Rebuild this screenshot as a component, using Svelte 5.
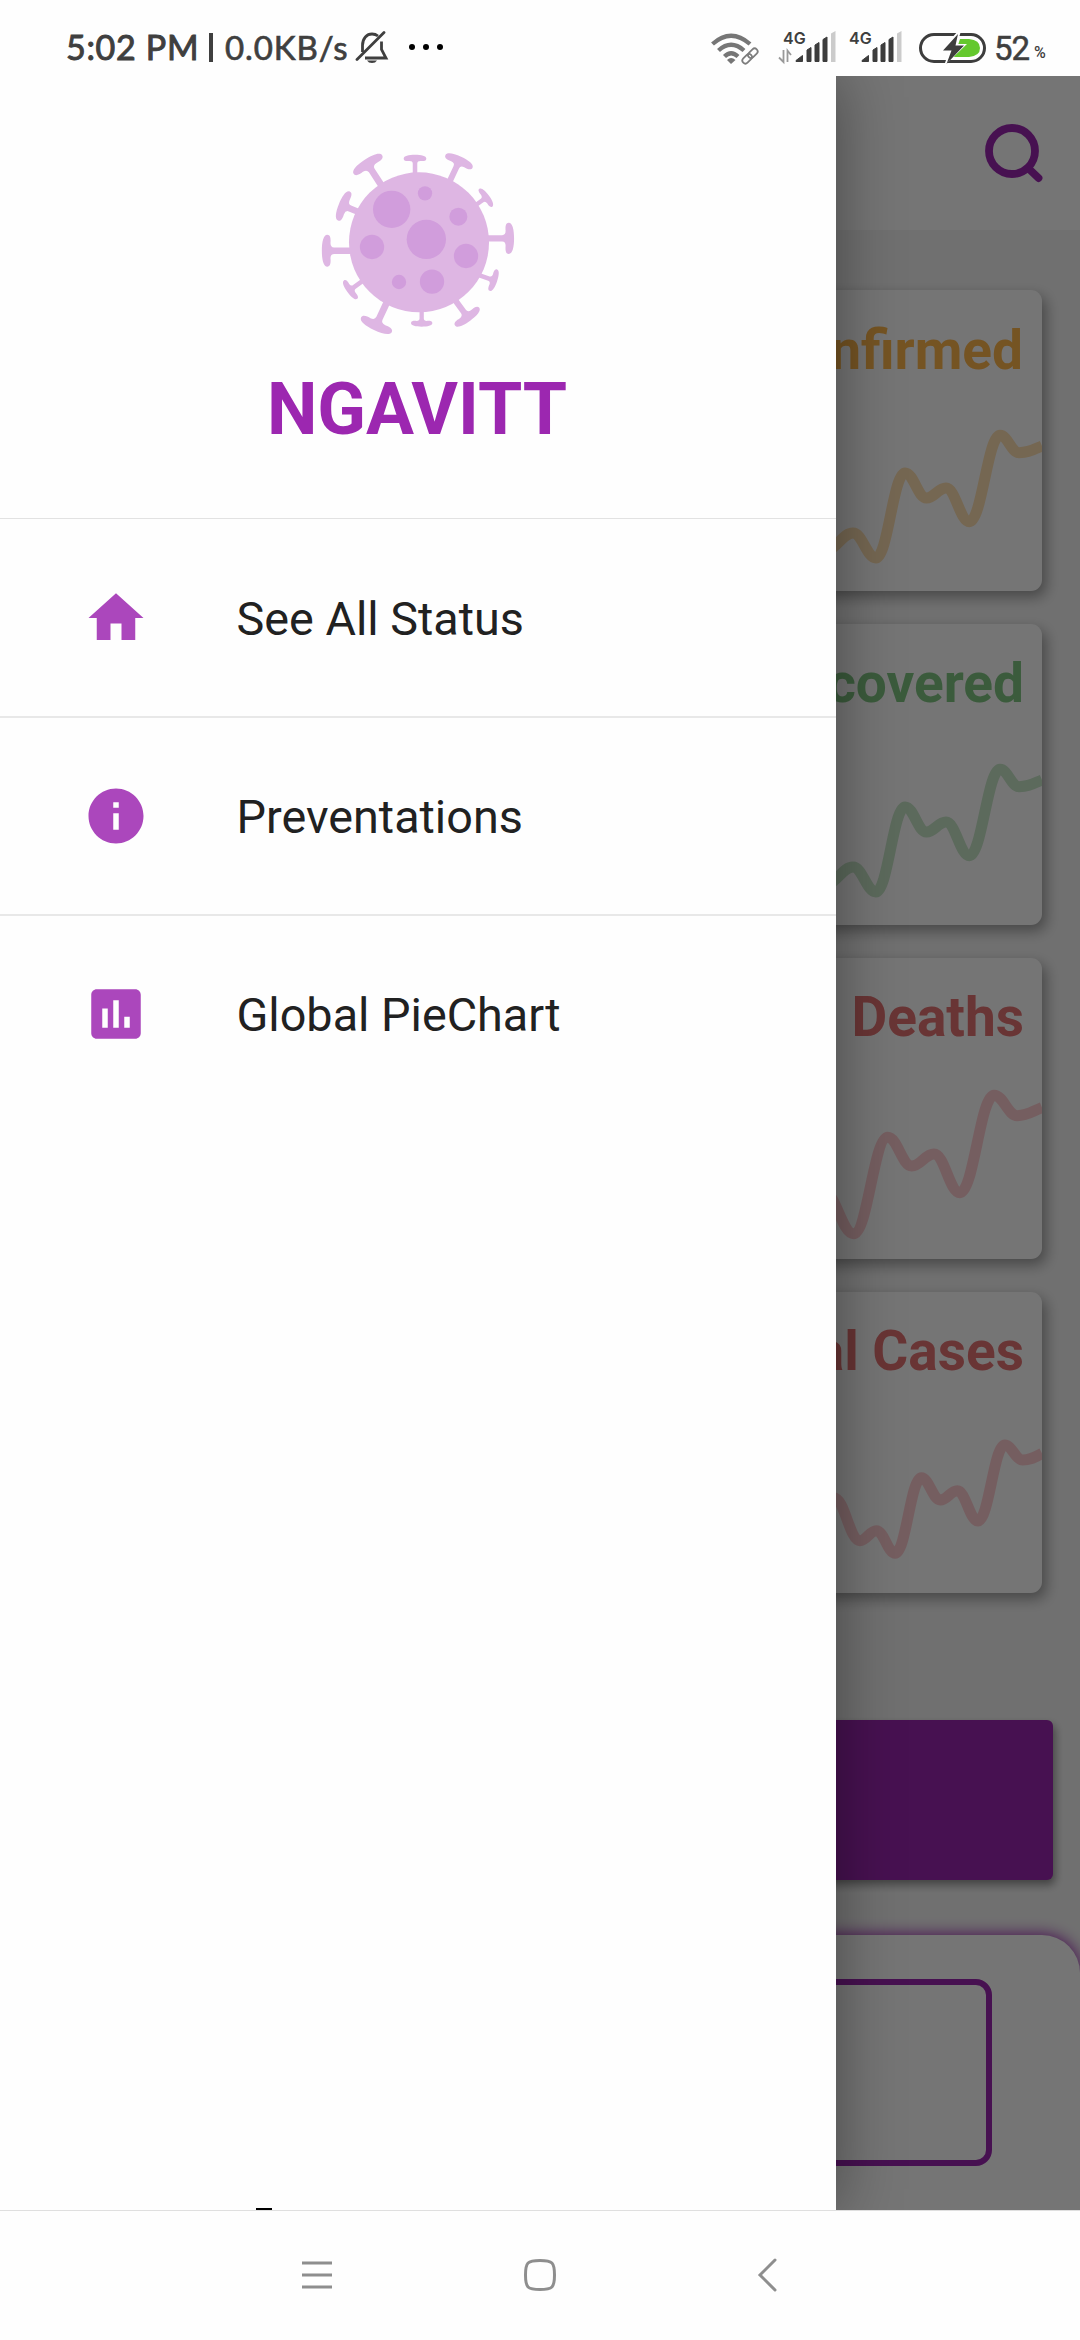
<script>
  const menu = [
    { label: 'See All Status', icon: 'M10 20v-6h4v6h5v-8h3L12 3 2 12h3v8z' },
    {
      label: 'Preventations',
      icon: 'M12 2C6.48 2 2 6.48 2 12s4.48 10 10 10 10-4.48 10-10S17.52 2 12 2zm1 15h-2v-6h2v6zm0-8h-2V7h2v2z'
    },
    {
      label: 'Global PieChart',
      icon: 'M19 3H5c-1.1 0-2 .9-2 2v14c0 1.1.9 2 2 2h14c1.1 0 2-.9 2-2V5c0-1.1-.9-2-2-2zM9 17H7v-7h2v7zm4 0h-2V7h2v10zm4 0h-2v-4h2v4z'
    }
  ];

  const waveA = [[794, 268], [826, 260], [853, 243], [876, 268], [905, 183], [926.5, 208], [946, 198], [969.5, 231.7], [1000, 145.3], [1019, 162.7], [1042, 156]];
  const cards = [
    { title: 'Confirmed', tone: 'orange', points: waveA },
    { title: 'Recovered', tone: 'green', points: waveA },
    { title: 'Deaths', tone: 'red', points: [[824, 234], [853.7, 275.7], [887.7, 179.3], [911.7, 208], [934, 196], [960, 234.7], [994, 137.3], [1017.3, 157.7], [1042, 149.5]] },
    { title: 'Total Cases', tone: 'red', points: [[834, 206], [860, 248.7], [876.3, 238.7], [895.3, 261.3], [921.3, 185.7], [940.3, 208], [957.3, 198.7], [978, 229], [1004.7, 153], [1022.7, 168], [1042, 161.5]] }
  ];

  function curve(points) {
    let d = `M${points[0][0]} ${points[0][1]}`;
    for (let i = 1; i < points.length; i++) {
      const [x0, y0] = points[i - 1];
      const [x1, y1] = points[i];
      const k = (x1 - x0) * 0.4;
      const end = i === points.length - 1 ? y1 + 4 : y1;
      d += `C${x0 + k} ${y0} ${x1 - k} ${end} ${x1} ${y1}`;
    }
    return d;
  }

  const spikes = [
    [352, 101, -33, 1.02], [495, 84, 0, 0.68], [628, 92, 25, 0.9], [709, 202, 54, 0.66],
    [779, 325, 90, 0.94], [732, 451, 109, 0.68], [653, 562, 144, 0.9], [515, 581, 180, 0.64],
    [378, 587, 205, 1.02], [300, 480, 234, 0.68], [229, 362, 270, 0.96], [279, 227, -68, 0.94]
  ];
  const spots = [
    [425, 238, 56], [525, 190, 21.5], [625, 260, 27], [529, 328, 59], [366, 351, 36.5],
    [648, 378, 36.5], [447, 456, 21.5], [546, 455, 36.5]
  ];
</script>

<div class="phone">
  <header class="status">
    <span class="time">5:02 PM</span>
    <span class="bar"></span>
    <span class="speed">0.0KB/s</span>
    <svg class="bell" width="34" height="34" viewBox="0 0 34 34">
      <g fill="none" stroke="#3f3f3f" stroke-width="2.8">
        <path d="M7.5 21V14.500C7.500 7 12 3 17 3Q20.500 3 23 5" />
        <path d="M26.500 10.500V18.500L31 27H10" />
        <path d="M2 28.500L29 1.500" stroke-linecap="round" />
      </g>
      <path d="M12 29.500H22Q20.500 32 17 32T12 29.500z" fill="#3f3f3f" />
    </svg>
    <span class="dots"><i></i><i></i><i></i></span>
    <svg class="wifi" width="50" height="36" viewBox="0 0 50 36">
      <g fill="none" stroke="#767676" stroke-width="4.300">
        <path d="M2.500 14Q21 -2.500 40 14" />
        <path d="M8.500 20.500Q21 9 34 20.500" />
        <path d="M14.500 26.500Q21 20 28 26.500" />
      </g>
      <path d="M17 30Q21 26 25.500 30L21 34z" fill="#767676" />
      <g transform="translate(40 26) rotate(-45)">
        <g fill="none" stroke="#fff" stroke-width="5"><rect x="-9.500" y="-3" width="11" height="6.500" rx="3.200" /></g>
        <g fill="none" stroke="#7d7d7d" stroke-width="1.800">
          <rect x="-9.500" y="-3" width="11" height="6" rx="3" /><rect x="-1.500" y="-3" width="11" height="6" rx="3" />
        </g>
      </g>
    </svg>
    {#each [true, false] as data}
      <div class="sim" class:data>
        <span>4G</span>
        <svg width="60" height="34" viewBox="0 0 60 34">
          {#if data}
            <path d="M5.500 19v12L1 26.500M9.500 31V19.500L13 24" fill="none" stroke="#999" stroke-width="1.800" />
          {/if}
          <path d="M18 30.500v-1l6.500-5v6zM29 30.500V19l4-2.500v14zM37 30.500V14l4-2.500v19zM45 30.500V8.500l4-2.500v24.500z" fill="#3d3d3d" stroke="#3d3d3d" stroke-linejoin="round" />
          <path d="M53 31V2.500l4.500-2.500V31z" fill="#cbcbcb" />
        </svg>
      </div>
    {/each}
    <svg class="battery" width="70" height="34" viewBox="0 0 70 34">
      <rect x="2.500" y="3.500" width="64" height="27" rx="13.500" fill="none" stroke="#3d3d3d" stroke-width="3" />
      <path d="M42 8H51Q62 9 62 17T51 26H36z" fill="#64c82d" />
      <path d="M41 -1L22 20H31L26 35 49 13H39L43 0z" fill="#fff" />
      <path d="M40 3L25 19.500H33.500L28.500 33 46 14.500H37.500z" fill="#3d3d3d" />
    </svg>
    <span class="level">52</span><span class="percent">%</span>
  </header>

  <div class="stage">
    <main class="page">
      <div class="appbar">
        <svg width="68" height="68" viewBox="0 0 68 68">
          <circle cx="34" cy="34" r="23" />
          <path d="M50 51L60.500 61" />
        </svg>
      </div>
      <div class="cards">
        {#each cards as card}
          <section class="card {card.tone}">
            <h2>{card.title}</h2>
            <svg viewBox="784 0 258 301" width="258" height="301"><path d={curve(card.points)} /></svg>
          </section>
        {/each}
      </div>
      <div class="button"></div>
      <div class="sheet"><div class="outline"></div></div>
    </main>
    <div class="scrim"></div>
    <aside class="drawer">
      <div class="brand">
        <svg viewBox="210 60 590 560" width="196.700" height="186.700">
          <g fill="#deb6e3">
            {#each spikes as [x, y, angle, scale]}
              <path
                transform="translate({x} {y}) rotate({angle}) scale({scale})"
                d="M-10 84V24Q-10 13-24 13C-34 14-50 14-50 3C-50-9-28-14 0-14S50-9 50 3C50 14 34 14 24 13Q10 13 10 24V84Z"
              />
            {/each}
            <circle cx="507" cy="337" r="210" />
          </g>
          <g fill="#d19ddc">
            {#each spots as [cx, cy, r]}<circle {cx} {cy} {r} />{/each}
          </g>
        </svg>
        <h1>NGAVITT</h1>
      </div>
      <nav>
        {#each menu as item}
          <div class="item">
            <svg width="66" height="66" viewBox="0 0 24 24"><path d={item.icon} /></svg>
            <span>{item.label}</span>
          </div>
        {/each}
      </nav>
      <div class="peek"></div>
    </aside>
  </div>

  <footer>
    <svg width="32" height="34" viewBox="0 0 32 34"><path d="M1 5H31M1 17H31M1 29H31" /></svg>
    <svg width="34" height="34" viewBox="0 0 34 34"><path d="M17 2.500C29.500 2.500 31.500 4.500 31.500 17S29.500 31.500 17 31.500 2.500 29.500 2.500 17 4.500 2.500 17 2.500z" /></svg>
    <svg width="20" height="34" viewBox="0 0 20 34"><path d="M18 2L3 17 18 32" stroke-linecap="round" /></svg>
  </footer>
</div>

<style>
  :global(body) {
    margin: 0;
    background: #fff;
  }
  .phone {
    width: 1080px;
    height: 2340px;
    display: flex;
    flex-direction: column;
    overflow: hidden;
    background: #fefefe;
    font-family: Roboto, sans-serif;
  }
  h1,
  h2 {
    margin: 0;
  }
  svg {
    display: block;
    flex: none;
  }

  .status {
    height: 76px;
    box-sizing: border-box;
    padding: 20px 0 0 66px;
    display: flex;
    align-items: flex-start;
    color: #3f3f3f;
    font-family: Lato, sans-serif;
    line-height: 54px;
  }
  .status > span {
    flex: none;
    white-space: nowrap;
  }
  .time {
    width: 144px;
    font-size: 34px;
    letter-spacing: 0.700px;
    -webkit-text-stroke: 1px #3f3f3f;
  }
  .bar {
    width: 3.500px;
    height: 29px;
    margin: 13px 12.500px 0 -1px;
    background: #3f3f3f;
  }
  .speed {
    width: 130px;
    font-size: 33px;
    letter-spacing: 0.900px;
    -webkit-text-stroke: 0.700px #3f3f3f;
  }
  .bell {
    margin-top: 11px;
  }
  .dots {
    display: flex;
    gap: 8px;
    margin: 24px 0 0 20px;
  }
  .dots i {
    width: 6px;
    height: 6px;
    border-radius: 50%;
    background: #000;
  }
  .wifi {
    margin: 10px 0 0 267px;
  }
  .sim {
    width: 60px;
    margin: 9px 0 0 6px;
    display: grid;
  }
  .sim.data {
    margin-left: 18px;
  }
  .sim > * {
    grid-area: 1 / 1;
  }
  .sim span {
    font: 600 16px/18px Inter, sans-serif;
    padding-left: 5px;
  }
  .sim svg {
    margin-top: 2px;
  }
  .battery {
    margin: 11px 0 0 14px;
  }
  .level {
    margin-left: 6px;
    font: 400 33px/58px Roboto, sans-serif;
    letter-spacing: -1px;
    -webkit-text-stroke: 0.500px #3f3f3f;
  }
  .percent {
    margin: 5px 0 0 5px;
    font: 500 16px/56px Roboto, sans-serif;
  }

  .stage {
    height: 2134px;
    flex: none;
    display: grid;
    grid-template: 2134px / 1080px;
    overflow: hidden;
  }
  .stage > * {
    grid-area: 1 / 1;
  }

  .page {
    display: flex;
    flex-direction: column;
    background: #f4f4f4;
    overflow: hidden;
  }
  .appbar {
    height: 154px;
    flex: none;
    box-sizing: border-box;
    padding: 41px 34px 0 0;
    display: flex;
    justify-content: flex-end;
    background: #fefefe;
  }
  .appbar svg {
    fill: none;
    stroke: #9c27b0;
    stroke-width: 7.800;
    stroke-linecap: round;
  }
  .cards {
    padding: 60px 38px 0;
    display: flex;
    flex-direction: column;
    gap: 33px;
  }
  .card {
    height: 301px;
    display: grid;
    justify-items: end;
    overflow: hidden;
    border-radius: 11px;
    background: #fefefe;
    box-shadow: 4px 6px 14px rgba(0, 0, 0, 0.36);
  }
  .card > * {
    grid-area: 1 / 1;
  }
  .card h2 {
    padding: 27px 18px 0 0;
    font-size: 55px;
    line-height: 64px;
    font-weight: 700;
  }
  .card.orange h2 {
    padding: 28px 19px 0 0;
  }
  .card path {
    fill: none;
    stroke-width: 11;
  }
  .orange h2 {
    color: #ffb74d;
  }
  .orange path {
    stroke: #ffe0b2;
  }
  .green h2 {
    color: #81c784;
  }
  .green path {
    stroke: #c8e6c9;
  }
  .red h2 {
    color: #e57373;
  }
  .red path {
    stroke: #ffcdd2;
  }
  .button {
    height: 160px;
    flex: none;
    margin: 127px 27px 0;
    border-radius: 6px;
    background: #9c27b0;
    box-shadow: 2px 5px 9px rgba(0, 0, 0, 0.4);
  }
  .sheet {
    height: 300px;
    flex: none;
    margin-top: 55px;
    padding: 44px 88px 0;
    border-radius: 38px 38px 0 0;
    background: #fefefe;
    box-shadow: 0 0 15px 1px #9c27b0;
  }
  .outline {
    height: 175px;
    border: 6px solid #9c27b0;
    border-radius: 16px;
  }
  .scrim {
    background: rgba(0, 0, 0, 0.54);
  }

  .drawer {
    width: 836px;
    display: flex;
    flex-direction: column;
    background: #fefefe;
    box-shadow: 0 0 60px rgba(0, 0, 0, 0.4);
  }
  .brand {
    height: 443px;
    flex: none;
    box-sizing: border-box;
    padding-top: 74px;
    border-bottom: 1px solid #e2e2e2;
    display: flex;
    flex-direction: column;
    align-items: center;
  }
  .brand h1 {
    margin-top: 31px;
    padding-right: 2px;
    font-size: 71.500px;
    line-height: 84px;
    font-weight: 700;
    color: #9c27b0;
  }
  .item {
    height: 198px;
    box-sizing: border-box;
    padding-left: 83px;
    display: flex;
    align-items: center;
    gap: 87.500px;
    font-size: 46.750px;
    color: #212121;
  }
  .item:first-child {
    height: 197px;
  }
  .item span {
    padding-top: 2px;
  }
  .item + .item {
    border-top: 2px solid #e8e8e8;
  }
  .item svg {
    fill: #ab47bc;
  }
  .peek {
    width: 16px;
    height: 2px;
    margin: auto 0 0 256px;
    background: #000;
  }

  footer {
    flex: 1;
    box-sizing: border-box;
    padding: 47px 0 0 301px;
    border-top: 1px solid #dfdfdf;
    display: flex;
    align-items: flex-start;
  }
  footer svg {
    margin-right: 190px;
    fill: none;
    stroke: #8e8e8e;
    stroke-width: 3;
  }
  footer svg + svg {
    margin-right: 200px;
  }
</style>
